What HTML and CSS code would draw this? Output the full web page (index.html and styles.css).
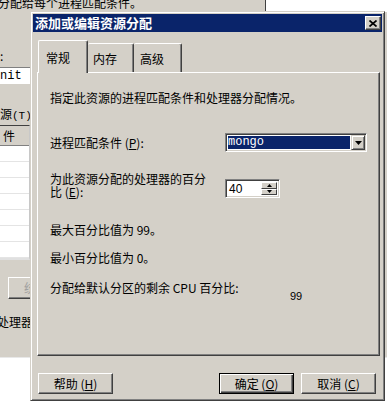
FILE: index.html
```html
<!DOCTYPE html>
<html>
<head>
<meta charset="utf-8">
<title>添加或编辑资源分配</title>
<link rel="stylesheet" href="styles.css">
</head>
<body>
<div class="desk">
  <div class="top-strip">
    <div class="top-text">分配给每个进程匹配条件。</div>
    <div class="top-btn"></div>
    <div class="top-white"></div>
  </div>
  <div class="left-col">
    <div class="bg-lbl colon">:</div>
    <div class="bg-field">nit</div>
    <div class="bg-lbl src">源<span class="mono">(T):</span></div>
    <div class="bg-list">
      <div class="bg-head">件</div>
      <div class="bg-row"></div>
      <div class="bg-row"></div>
      <div class="bg-row"></div>
      <div class="bg-row"></div>
      <div class="bg-row"></div>
      <div class="bg-row"></div>
      <div class="bg-row"></div>
    </div>
    <div class="bg-btn">统</div>
    <div class="bg-lbl proc">处理器</div>
  </div>
  <div class="bottom-white"></div>
</div>

<div class="dialog">
  <div class="titlebar">
    <span class="title">添加或编辑资源分配</span>
    <span class="close"><svg width="8" height="7" viewBox="0 0 8 7"><path d="M0.5 0.5L7.5 6.5M7.5 0.5L0.5 6.5" stroke="#000" stroke-width="1.7" fill="none"/></svg></span>
  </div>
  <div class="dbody">
    <div class="tabs">
      <div class="tab sel">常规</div>
      <div class="tab">内存</div>
      <div class="tab">高级</div>
    </div>
    <div class="panel">
      <p class="line intro">指定此资源的进程匹配条件和处理器分配情况。</p>
      <div class="row r-match">
        <span class="lab">进程匹配条件 (<u>P</u>):</span>
        <div class="combo">
          <span class="combo-sel">mongo</span>
          <span class="combo-btn"><svg width="7" height="4" viewBox="0 0 7 4"><path d="M0 0H7L3.5 4Z" fill="#000"/></svg></span>
        </div>
      </div>
      <div class="row r-pct">
        <span class="lab">为此资源分配的处理器的百分<br>比 (<u>E</u>):</span>
        <div class="spin">
          <span class="spin-val">40</span>
          <span class="spin-btns">
            <span class="sb"><svg width="5" height="3" viewBox="0 0 5 3"><path d="M2.5 0L5 3H0Z" fill="#000"/></svg></span>
            <span class="sb"><svg width="5" height="3" viewBox="0 0 5 3"><path d="M0 0H5L2.5 3Z" fill="#000"/></svg></span>
          </span>
        </div>
      </div>
      <p class="line max">最大百分比值为 99。</p>
      <p class="line min">最小百分比值为 0。</p>
      <div class="row r-rest">
        <span class="lab2">分配给默认分区的剩余 CPU 百分比:</span>
        <span class="rest-val">99</span>
      </div>
    </div>
    <div class="btns">
      <button class="btn help">帮助 (<u>H</u>)</button>
      <button class="btn ok">确定 (<u>O</u>)</button>
      <button class="btn cancel">取消 (<u>C</u>)</button>
    </div>
  </div>
</div>
</body>
</html>
```

FILE: styles.css
```css
* { box-sizing: border-box; margin: 0; padding: 0; }
html, body { width: 387px; height: 405px; overflow: hidden; }
body {
  position: relative;
  background: #d4d0c8;
  font-family: "Noto Sans CJK SC", "Liberation Sans", sans-serif;
  font-size: 12px;
  color: #000;
}

/* background window */
.desk { display: flex; flex-direction: column; height: 405px; }
.top-strip { height: 12px; display: flex; flex: none; }
.top-text {
  width: 190px; line-height: 12px; margin-top: -3px; margin-left: -2px;
  white-space: nowrap; overflow: hidden;
}
.top-btn { width: 78px; border-bottom: 1px solid #808080; border-right: 1px solid #404040; }
.top-white { flex: 1; background: #fff; }

.left-col { height: 345px; width: 31px; display: flex; flex-direction: column; overflow: hidden; flex: none; }
.bg-lbl { line-height: 14px; white-space: nowrap; }
.colon { margin-top: 37px; height: 14px; }
.mono { font-family: "Liberation Mono", monospace; font-size: 11px; }
.bg-field {
  margin-top: 4px; height: 17px; background: #fff; border-top: 1px solid #808080;
  font-family: "Liberation Mono", monospace; font-size: 12px; line-height: 16px;
}
.src { margin-top: 23px; }
.bg-list { margin-top: 2px; border-top: 1px solid #404040; background: #fff; border-right: 1px solid #c8c8c8; border-bottom: 2px solid #e0e0e0; width: 30px; }
.bg-head { height: 20px; background: #d4d0c8; border-bottom: 1px solid #808080; padding-left: 3px; line-height: 19px; }
.bg-row { height: 16px; border-bottom: 1px solid #e4e4e4; }
.bg-btn {
  margin-top: 17px; margin-left: 8px; height: 22px; width: 26px;
  border: 1px solid; border-color: #fff #404040 #404040 #fff;
  box-shadow: inset -1px -1px #808080;
  color: #a0a0a0; padding-left: 15px; line-height: 19px; overflow: hidden; white-space: nowrap;
}
.proc { margin-top: 16px; margin-left: -3px; }
.bottom-white { flex: 1; background: #fff; border-top: 1px solid #e8e8e8; }

/* dialog */
.dialog {
  position: absolute; left: 30px; top: 11px; width: 355px; height: 390px;
  background: #d4d0c8;
  border: 1px solid; border-color: #d4d0c8 #404040 #404040 #d4d0c8;
  box-shadow: inset 1px 1px #fff, inset -1px -1px #808080;
  padding: 2px;
}
.titlebar {
  height: 18px; background: #0a246a; display: flex; align-items: center; padding-left: 2px;
}
.title { color: #fff; font-weight: bold; font-size: 13px; line-height: 18px; letter-spacing: 0; }
.close {
  margin-left: auto; margin-right: 1px; width: 16px; height: 14px;
  background: #d4d0c8;
  border: 1px solid; border-color: #fff #404040 #404040 #fff;
  box-shadow: inset -1px -1px #808080;
  display: flex; align-items: center; justify-content: center;
}
.close svg { display: block; }

.dbody { padding: 8px 2px 0 4px; }
.tabs { display: flex; align-items: flex-end; height: 32px; padding-left: 1px; }
.tab {
  height: 29px; display: flex; align-items: center; padding-left: 5px;
  border-top: 1px solid #fff; border-left: 1px solid #fff; border-right: 1px solid #404040;
  box-shadow: inset -1px 0 #808080;
  border-radius: 2px 2px 0 0;
}
.tab:nth-child(2) { width: 46px; border-left: none; padding-left: 5px; }
.tab:nth-child(3) { width: 48px; border-left: none; padding-left: 6px; }
.tab.sel {
  width: 50px; height: 33px; margin-bottom: -1px; padding-left: 7px;
  background: #d4d0c8; position: relative; z-index: 1;
}

.panel {
  height: 284px;
  border: 1px solid; border-color: #fff #404040 #404040 #fff;
  box-shadow: inset -1px -1px #808080;
  padding: 18px 0 0 12px;
}
.line { line-height: 13px; white-space: nowrap; }
.row { display: flex; }
.lab { width: 175px; flex: none; line-height: 13px; white-space: nowrap; }
.r-match { margin-top: 29px; align-items: center; height: 19px; }
.combo {
  width: 142px; height: 19px; display: flex; background: #fff;
  border: 1px solid; border-color: #808080 #fff #fff #808080;
  box-shadow: inset 1px 1px #404040, inset -1px -1px #d4d0c8;
  padding: 1px;
}
.combo-sel {
  flex: 1; margin: 1px; background: #0a246a; color: #fff;
  font-family: "Liberation Mono", monospace; font-size: 12px; line-height: 13px;
}
.combo-btn {
  width: 14px; background: #d4d0c8;
  border: 1px solid; border-color: #d4d0c8 #404040 #404040 #d4d0c8;
  box-shadow: inset 1px 1px #fff, inset -1px -1px #808080;
  display: flex; align-items: center; justify-content: center;
}
.combo-btn svg, .sb svg { display: block; }

.r-pct { margin-top: 20px; }
.spin {
  margin-top: 7px; width: 55px; height: 19px; display: flex; background: #fff;
  border: 1px solid; border-color: #808080 #fff #fff #808080;
  box-shadow: inset 1px 1px #404040, inset -1px -1px #d4d0c8;
  padding: 2px;
}
.spin-val { flex: 1; font-family: "Liberation Sans", sans-serif; font-size: 12px; line-height: 15px; padding-left: 1px; }
.spin-btns { width: 16px; display: flex; flex-direction: column; }
.sb {
  flex: 1; background: #d4d0c8;
  border: 1px solid; border-color: #fff #404040 #404040 #fff;
  display: flex; align-items: center; justify-content: center;
}

.max { margin-top: 25px; }
.min { margin-top: 15px; }
.r-rest { margin-top: 17px; }
.lab2 { width: 240px; flex: none; line-height: 13px; white-space: nowrap; }
.rest-val { margin-top: 10px; font-family: "Liberation Sans", sans-serif; font-size: 11px; line-height: 11px; }

.btns { display: flex; margin-top: 17px; padding-left: 1px; padding-right: 4px; }
.btn {
  width: 75px; height: 21px; background: #d4d0c8;
  font-family: "Noto Sans CJK SC", "Liberation Sans", sans-serif; font-size: 12px; color: #000;
  border: 1px solid; border-color: #fff #404040 #404040 #fff;
  box-shadow: inset -1px -1px #808080;
  line-height: 17px;
}
.btn.ok {
  margin-left: auto; border-color: #000;
  box-shadow: inset 1px 1px #fff, inset -1px -1px #404040, inset -2px -2px #808080;
}
.btn.cancel { margin-left: 7px; }
u { text-decoration: underline; text-underline-offset: 1px; }
```
